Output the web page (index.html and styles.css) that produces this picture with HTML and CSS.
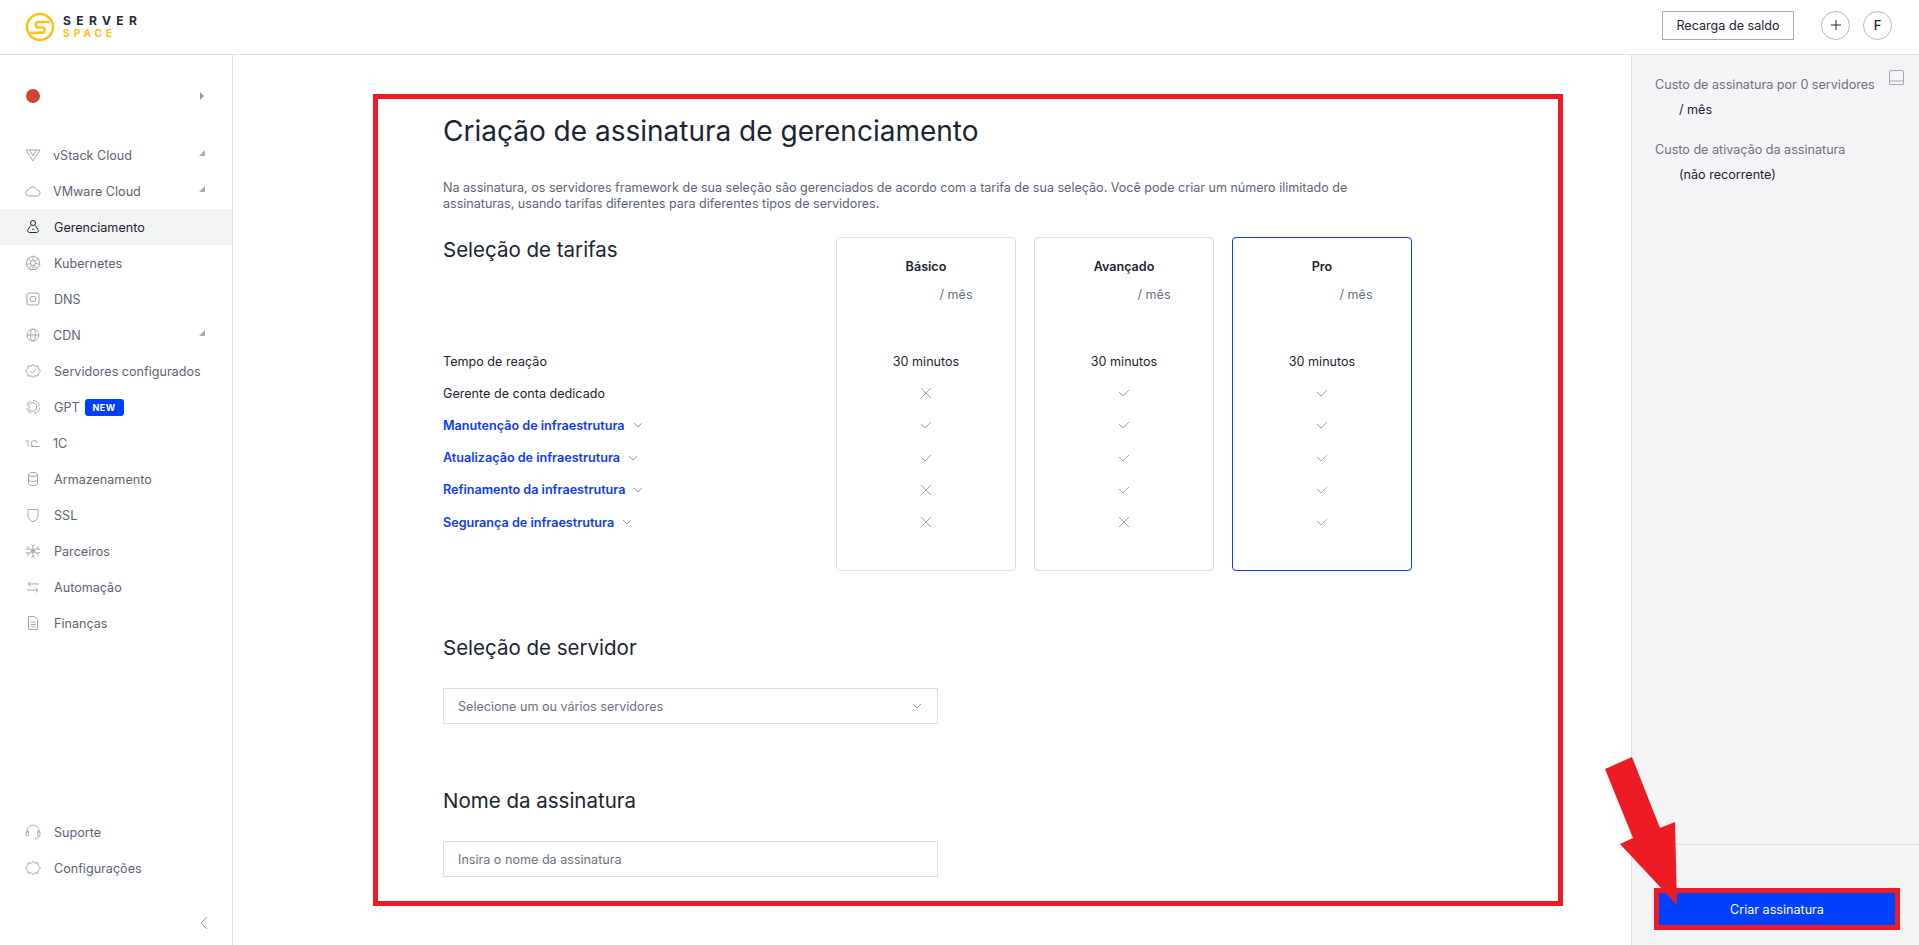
FILE: index.html
```html
<!DOCTYPE html>
<html lang="en">
<head>
  <meta charset="UTF-8" />
  <title>Criação de assinatura de gerenciamento</title>
  <link rel="stylesheet" href="styles.css">
</head>
<body>
  <header class="topbar">
    <div class="logo">
      <svg class="logo-mark" width="30" height="30" viewBox="0 0 30 30" fill="none" stroke="#fdc010" stroke-width="2.4">
        <circle cx="15" cy="15" r="13"/>
        <path d="M23.500 10H13.500a2.700 2.700 0 0 0 0 5.400h3.500a2.700 2.700 0 0 1 0 5.400H6" stroke-linecap="round"/>
      </svg>
      <div class="logo-text">
        <span class="logo-server">SERVER</span>
        <span class="logo-space">SPACE</span>
      </div>
    </div>
    <div class="topbar-right">
      <button class="btn-outline">Recarga de saldo</button>
      <button class="btn-round btn-plus">
        <svg width="10" height="10" viewBox="0 0 10 10" stroke="#1c2433" stroke-width="1"><path d="M5 0v10M0 5h10"/></svg>
      </button>
      <button class="btn-round">F</button>
    </div>
  </header>

  <div class="layout">
    <aside class="sidebar">
      <div class="project">
        <span class="project-dot"></span>
        <span class="caret-right"></span>
      </div>
      <nav class="nav">
        <a class="nav-item nav-tight">
          <svg class="nav-icon" viewBox="0 0 18 18"><path d="M2 4h14L9 15zM5.500 4 9 10l3.500-6"/></svg>
          vStack Cloud<span class="caret-corner"></span>
        </a>
        <a class="nav-item nav-tight">
          <svg class="nav-icon" viewBox="0 0 18 18"><path d="M4.500 14a3 3 0 0 1-.500-5.900A5 5 0 0 1 13 7.500a3.300 3.300 0 0 1 .5 6.500z"/></svg>
          VMware Cloud<span class="caret-corner"></span>
        </a>
        <a class="nav-item active">
          <svg class="nav-icon" viewBox="0 0 18 18"><circle cx="9" cy="5" r="2.500"/><path d="M6.800 7.500 4 11.500c-.8 1.500 0 3 1.500 3h7c1.500 0 2.300-1.500 1.500-3l-2.800-4M9 10.500v1.500"/></svg>
          Gerenciamento
        </a>
        <a class="nav-item">
          <svg class="nav-icon" viewBox="0 0 18 18"><path d="M9 2l5.500 2.700 1.400 6-3.800 4.800H5.900L2.100 10.700l1.400-6z"/><circle cx="9" cy="9" r="2.500"/><path d="M9 2v4.500M9 11.500v4M2.500 10.500l4-1M11.500 9l4 1.500M4 4.500l3.500 3M14 4.500l-3.500 3M5.500 15l2-3.800M12.500 15l-2-3.800"/></svg>
          Kubernetes
        </a>
        <a class="nav-item">
          <svg class="nav-icon" viewBox="0 0 18 18"><rect x="3" y="3" width="12" height="12" rx="2"/><rect x="6.500" y="6.500" width="5" height="5" rx="1.500"/></svg>
          DNS
        </a>
        <a class="nav-item nav-tight">
          <svg class="nav-icon" viewBox="0 0 18 18"><circle cx="9" cy="9" r="6"/><ellipse cx="9" cy="9" rx="2.500" ry="6"/><path d="M3 9h12"/></svg>
          CDN<span class="caret-corner"></span>
        </a>
        <a class="nav-item">
          <svg class="nav-icon" viewBox="0 0 18 18"><path d="M9 2.500 11 4.200l2.800-.3.600 2.700 2.100 2.400-2.100 2.400-.6 2.700-2.800-.3L9 15.500l-2-1.700-2.800.3-.6-2.700L1.500 9l2.100-2.400.6-2.700 2.800.3z"/><path d="M6.500 9l2 2 3.200-3.500"/></svg>
          Servidores configurados
        </a>
        <a class="nav-item">
          <svg class="nav-icon" viewBox="0 0 18 18"><path d="M9 2.500a6.500 6.500 0 0 1 6.300 5M15.500 10A6.500 6.500 0 0 1 10 15.400M7.500 15.300A6.500 6.500 0 0 1 2.600 10M2.700 7.500A6.500 6.500 0 0 1 6.500 3"/><path d="M6 5.500l3-1 3.500 2M12.500 7v4l-2 2.500M10 13H6.500l-1.500-2.500V6"/></svg>
          GPT<span class="badge">NEW</span>
        </a>
        <a class="nav-item nav-tight">
          <svg class="nav-icon" viewBox="0 0 18 18"><path d="M1.500 7.500 4 6.500v6M15.500 12.500H10a3 3 0 1 1 3-3.500"/><path d="M7 12.500h8.500"/></svg>
          1C
        </a>
        <a class="nav-item">
          <svg class="nav-icon" viewBox="0 0 18 18"><ellipse cx="9" cy="4.500" rx="4.500" ry="2"/><path d="M4.500 4.500v9c0 1 2 2 4.500 2s4.500-1 4.500-2v-9M4.500 9.500c0 1 2 2 4.500 2s4.500-1 4.500-2"/></svg>
          Armazenamento
        </a>
        <a class="nav-item">
          <svg class="nav-icon" viewBox="0 0 18 18"><path d="M4 3.500h10v6.500c0 3-2.700 4.800-5 5.800-2.300-1-5-2.800-5-5.800z"/></svg>
          SSL
        </a>
        <a class="nav-item">
          <svg class="nav-icon" viewBox="0 0 18 18"><path d="M9 3v12M3.800 6l10.400 6M14.200 6 3.800 12M7.500 2.500 9 4l1.500-1.500M7.500 15.500 9 14l1.500 1.500M2 7.500l2.500-.5-.7-2.500M16 7.500 13.500 7l.7-2.500M2 10.500l2.500.5-.7 2.500M16 10.500l-2.500.5.7 2.500"/><circle cx="9" cy="9" r="1.800"/></svg>
          Parceiros
        </a>
        <a class="nav-item">
          <svg class="nav-icon" viewBox="0 0 18 18"><path d="M4 6h11M6.500 3.500 4 6l2.500 2.500M14 12H3M11.500 9.500 14 12l-2.500 2.500"/></svg>
          Automação
        </a>
        <a class="nav-item">
          <svg class="nav-icon" viewBox="0 0 18 18"><path d="M4.500 2.500h6l3 3v10h-9zM6.500 8h5M6.500 10.500h5M6.500 13h5"/></svg>
          Finanças
        </a>
      </nav>
      <nav class="nav nav-bottom">
        <a class="nav-item">
          <svg class="nav-icon" viewBox="0 0 18 18"><path d="M3 10V8a6 6 0 0 1 12 0v2"/><rect x="2" y="8" width="2.500" height="5" rx="1.200"/><rect x="13.500" y="8" width="2.500" height="5" rx="1.200"/><path d="M15 13c0 2-1.500 2.500-4 2.800"/></svg>
          Suporte
        </a>
        <a class="nav-item">
          <svg class="nav-icon" viewBox="0 0 18 18"><path d="M9 2.500 11 4.200l2.800-.3.600 2.700 2.100 2.400-2.100 2.400-.6 2.700-2.800-.3L9 15.500l-2-1.700-2.800.3-.6-2.700L1.500 9l2.100-2.400.6-2.700 2.800.3z"/></svg>
          Configurações
        </a>
      </nav>
      <div class="collapse">
        <svg width="8" height="14" viewBox="0 0 8 14" fill="none" stroke="#9a9fa8"><path d="M7 1 1 7l6 6"/></svg>
      </div>
    </aside>

    <main class="content">
      <h1 class="page-title">Criação de assinatura de gerenciamento</h1>
      <p class="page-desc">Na assinatura, os servidores framework de sua seleção são gerenciados de acordo com a tarifa de sua seleção. Você pode criar um número ilimitado de assinaturas, usando tarifas diferentes para diferentes tipos de servidores.</p>

      <section class="tariffs">
        <div class="tariff-labels">
          <h2 class="section-title">Seleção de tarifas</h2>
          <div class="label-rows">
            <div class="row-label">Tempo de reação</div>
            <div class="row-label">Gerente de conta dedicado</div>
            <div class="row-label link">Manutenção de infraestrutura <svg class="chev" viewBox="0 0 10 6"><path d="M1 1l4 4 4-4"/></svg></div>
            <div class="row-label link">Atualização de infraestrutura <svg class="chev" viewBox="0 0 10 6"><path d="M1 1l4 4 4-4"/></svg></div>
            <div class="row-label link">Refinamento da infraestrutura <svg class="chev" viewBox="0 0 10 6"><path d="M1 1l4 4 4-4"/></svg></div>
            <div class="row-label link">Segurança de infraestrutura <svg class="chev" viewBox="0 0 10 6"><path d="M1 1l4 4 4-4"/></svg></div>
          </div>
        </div>

        <div class="card">
          <div class="card-name">Básico</div>
          <div class="card-price">/ mês</div>
          <div class="card-rows">
            <div class="cell">30 minutos</div>
            <div class="cell"><svg class="no" viewBox="0 0 12 12"><path d="M1 1l10 10M11 1 1 11"/></svg></div>
            <div class="cell"><svg class="yes" viewBox="0 0 12 8"><path d="M1 3l4 4 6-6"/></svg></div>
            <div class="cell"><svg class="yes" viewBox="0 0 12 8"><path d="M1 3l4 4 6-6"/></svg></div>
            <div class="cell"><svg class="no" viewBox="0 0 12 12"><path d="M1 1l10 10M11 1 1 11"/></svg></div>
            <div class="cell"><svg class="no" viewBox="0 0 12 12"><path d="M1 1l10 10M11 1 1 11"/></svg></div>
          </div>
        </div>

        <div class="card">
          <div class="card-name">Avançado</div>
          <div class="card-price">/ mês</div>
          <div class="card-rows">
            <div class="cell">30 minutos</div>
            <div class="cell"><svg class="yes" viewBox="0 0 12 8"><path d="M1 3l4 4 6-6"/></svg></div>
            <div class="cell"><svg class="yes" viewBox="0 0 12 8"><path d="M1 3l4 4 6-6"/></svg></div>
            <div class="cell"><svg class="yes" viewBox="0 0 12 8"><path d="M1 3l4 4 6-6"/></svg></div>
            <div class="cell"><svg class="yes" viewBox="0 0 12 8"><path d="M1 3l4 4 6-6"/></svg></div>
            <div class="cell"><svg class="no" viewBox="0 0 12 12"><path d="M1 1l10 10M11 1 1 11"/></svg></div>
          </div>
        </div>

        <div class="card card-pro">
          <div class="card-name">Pro</div>
          <div class="card-price">/ mês</div>
          <div class="card-rows">
            <div class="cell">30 minutos</div>
            <div class="cell"><svg class="yes" viewBox="0 0 12 8"><path d="M1 3l4 4 6-6"/></svg></div>
            <div class="cell"><svg class="yes" viewBox="0 0 12 8"><path d="M1 3l4 4 6-6"/></svg></div>
            <div class="cell"><svg class="yes" viewBox="0 0 12 8"><path d="M1 3l4 4 6-6"/></svg></div>
            <div class="cell"><svg class="yes" viewBox="0 0 12 8"><path d="M1 3l4 4 6-6"/></svg></div>
            <div class="cell"><svg class="yes" viewBox="0 0 12 8"><path d="M1 3l4 4 6-6"/></svg></div>
          </div>
        </div>
      </section>

      <section class="field-server">
        <h2 class="section-title">Seleção de servidor</h2>
        <div class="field">Selecione um ou vários servidores <svg class="chev" viewBox="0 0 10 6"><path d="M1 1l4 4 4-4"/></svg></div>
      </section>

      <section class="field-name">
        <h2 class="section-title">Nome da assinatura</h2>
        <div class="field">Insira o nome da assinatura</div>
      </section>
    </main>

    <aside class="summary">
      <div class="summary-top">
        <svg class="summary-icon" viewBox="0 0 15 15"><path d="M.5 14.500V2a1.500 1.500 0 0 1 1.500-1.500h11A1.500 1.500 0 0 1 14.500 2v12.500zM.5 11h14"/></svg>
        <div class="summary-label">Custo de assinatura por 0 servidores</div>
        <div class="summary-value">/ mês</div>
        <div class="summary-label summary-gap">Custo de ativação da assinatura</div>
        <div class="summary-value">(não recorrente)</div>
      </div>
      <div class="summary-foot">
        <button class="btn-primary">Criar assinatura</button>
      </div>
    </aside>
  </div>

  <!-- red annotations from the screenshot -->
  <div class="mark-frame"></div>
  <div class="mark-button"></div>
  <svg class="mark-arrow" width="90" height="160" viewBox="0 0 90 160"><polygon fill="#ed1c24" points="12,12 39,0 67,71 82,65 84,148 27,87 40,81"/></svg>
</body>
</html>
```

FILE: styles.css
```css
* {
  box-sizing: border-box;
}
html, body {
  height: 100%;
}
body {
  margin: 0;
  font-family: Inter, "Liberation Sans", sans-serif;
  font-size: 12.6px;
  color: #1c2433;
  background: #fff;
  overflow: hidden;
  display: flex;
  flex-direction: column;
}
button {
  font-family: inherit;
  cursor: pointer;
}

/* top bar */
.topbar {
  height: 55px;
  flex: none;
  display: flex;
  align-items: center;
  justify-content: space-between;
  padding: 0 27px 4px 25px;
  border-bottom: 1px solid #dedfe1;
}
.logo {
  display: flex;
  align-items: center;
  gap: 8px;
  margin-top: 4px;
}
.logo-text {
  display: flex;
  flex-direction: column;
  font-weight: 700;
  line-height: 13px;
}
.logo-server {
  font-size: 12px;
  letter-spacing: 5.4px;
  color: #262b3b;
}
.logo-space {
  font-size: 10px;
  letter-spacing: 4.1px;
  color: #fdc010;
}
.topbar-right {
  display: flex;
  align-items: center;
}
.btn-outline {
  width: 132px;
  height: 29px;
  background: #fff;
  border: 1px solid #a9abb0;
  color: #1c2433;
  font-size: 12.6px;
  margin-right: 27px;
}
.btn-round {
  width: 29px;
  height: 29px;
  border-radius: 50%;
  background: #fff;
  border: 1px solid #b5b7bb;
  color: #1c2433;
  font-size: 13px;
  font-weight: 500;
  padding: 0;
  display: flex;
  align-items: center;
  justify-content: center;
}
.btn-plus {
  margin-right: 13px;
}

.layout {
  flex: 1;
  display: flex;
  min-height: 0;
}

/* sidebar */
.sidebar {
  width: 233px;
  flex: none;
  border-right: 1px solid #dedfe1;
  display: flex;
  flex-direction: column;
  position: relative;
}
.project {
  height: 82px;
  display: flex;
  align-items: center;
  justify-content: space-between;
  padding: 0 28px 0 26px;
}
.project-dot {
  width: 14px;
  height: 14px;
  border-radius: 50%;
  background: #cf4333;
}
.caret-right {
  border-left: 4px solid #9a9ca1;
  border-top: 4px solid transparent;
  border-bottom: 4px solid transparent;
}
.nav {
  display: flex;
  flex-direction: column;
}
.nav-bottom {
  margin-top: auto;
  margin-bottom: 59px;
}
.nav-item {
  height: 36px;
  display: flex;
  align-items: center;
  padding-left: 24px;
  color: #5b6475;
  position: relative;
  gap: 12px;
}
.nav-tight {
  gap: 11px;
}
.nav-item.active {
  background: #f2f3f3;
  color: #1c2433;
}
.nav-icon {
  width: 18px;
  height: 18px;
  flex: none;
  fill: none;
  stroke: #a5a7ab;
  stroke-width: 1;
}
.active .nav-icon {
  stroke: #1c2433;
}
.caret-corner {
  position: absolute;
  right: 27px;
  top: 13px;
  border-right: 6px solid #a9abae;
  border-top: 6px solid transparent;
}
.badge {
  margin-left: -7px;
  width: 39px;
  height: 17px;
  background: #0040ff;
  color: #fff;
  font-size: 9px;
  font-weight: 700;
  letter-spacing: .5px;
  border-radius: 3px;
  display: flex;
  align-items: center;
  justify-content: center;
}
.collapse {
  position: absolute;
  right: 24px;
  bottom: 15px;
  display: flex;
}

/* main column */
.content {
  flex: 1;
  padding: 58px 0 0 210px;
  min-width: 0;
  overflow: hidden;
}
.page-title {
  margin: 0;
  font-size: 28px;
  line-height: 36px;
  font-weight: 400;
}
.page-desc {
  margin: 31px 0 0;
  width: 930px;
  font-size: 12.55px;
  line-height: 16px;
  color: #5b6475;
}
.tariffs {
  display: flex;
  gap: 18px;
  margin-top: 25px;
}
.tariff-labels {
  width: 375px;
}
.section-title {
  margin: 0;
  font-size: 20.5px;
  line-height: 26px;
  font-weight: 400;
}
.label-rows {
  margin-top: 82px;
}
.row-label {
  height: 32.2px;
  display: flex;
  align-items: center;
  gap: 8px;
}
.link {
  color: #0a3cff;
  font-weight: 600;
}
.chev {
  width: 10px;
  height: 6px;
  fill: none;
  stroke: #9299ad;
}
.card {
  width: 180px;
  height: 334px;
  border: 1px solid #dcdddf;
  border-radius: 4px;
  text-align: center;
  padding-top: 20px;
}
.card-pro {
  border-color: #0a3cff;
}
.card-name {
  font-weight: 600;
  line-height: 18px;
}
.card-price {
  margin-top: 10px;
  line-height: 18px;
  padding-left: 60px;
  color: #6a7282;
}
.card-pro .card-price {
  padding-left: 68px;
}
.card-rows {
  margin-top: 41px;
}
.cell {
  height: 32.2px;
  display: flex;
  align-items: center;
  justify-content: center;
}
.yes {
  width: 12px;
  height: 8px;
  fill: none;
  stroke: #a3a6ab;
}
.no {
  width: 12px;
  height: 12px;
  fill: none;
  stroke: #9aa2b5;
}
.field-server {
  margin-top: 64px;
}
.field-name {
  margin-top: 64px;
}
.field {
  margin-top: 27px;
  width: 495px;
  height: 36px;
  border: 1px solid #dcdddf;
  display: flex;
  align-items: center;
  justify-content: space-between;
  padding: 0 15px 0 14px;
  color: #6a7282;
}

/* right column */
.summary {
  width: 288px;
  flex: none;
  background: #f4f4f7;
  border-left: 1px solid #dedfe1;
  display: flex;
  flex-direction: column;
}
.summary-top {
  flex: 1;
  padding: 21px 0 0 23px;
  position: relative;
}
.summary-icon {
  position: absolute;
  top: 15px;
  right: 15px;
  width: 15px;
  height: 15px;
  fill: none;
  stroke: #a9abb0;
}
.summary-label {
  line-height: 18px;
  color: #6a7282;
}
.summary-gap {
  margin-top: 22px;
}
.summary-value {
  margin: 7px 0 0 24px;
  line-height: 18px;
  color: #1c2433;
}
.summary-foot {
  height: 101px;
  flex: none;
  border-top: 1px solid #dedfe1;
  padding: 48px 24px 0 27px;
}
.btn-primary {
  width: 236px;
  height: 32px;
  border: none;
  background: #0040ff;
  color: #fff;
  font-size: 12.6px;
  font-weight: 400;
  display: block;
}

/* annotations laid over the page */
.mark-frame {
  position: absolute;
  left: 373px;
  top: 94px;
  width: 1190px;
  height: 812px;
  border: 5px solid #ed1c24;
  pointer-events: none;
}
.mark-button {
  position: absolute;
  left: 1654px;
  top: 888px;
  width: 246px;
  height: 42px;
  border: 5px solid #ed1c24;
  pointer-events: none;
}
.mark-arrow {
  position: absolute;
  left: 1593px;
  top: 757px;
}
```
